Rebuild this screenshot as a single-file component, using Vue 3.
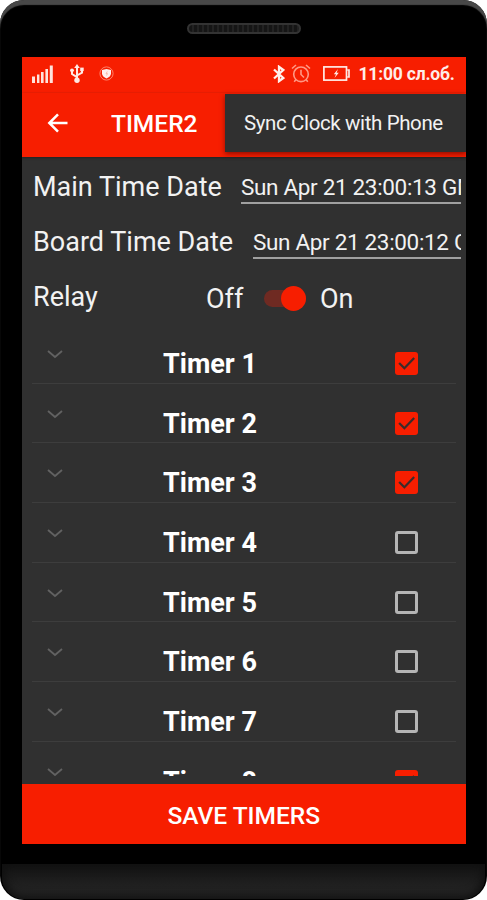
<template>
  <div class="phone">
    <div class="speaker"></div>
    <div class="chin"></div>

    <div class="screen">
      <!-- status bar -->
      <div class="status-bar">
        <svg class="icon-signal" width="22" height="18" viewBox="0 0 22 18" fill="#ffe3dc">
          <rect x="0" y="11.5" width="3" height="6.5" />
          <rect x="5" y="9.5" width="2.4" height="8.5" />
          <rect x="9" y="7" width="2.6" height="11" />
          <rect x="13.4" y="4" width="2.6" height="14" />
          <rect x="17.8" y="0.5" width="3" height="17.5" />
        </svg>
        <svg class="icon-usb" width="14" height="19" viewBox="0 0 14 19" fill="none" stroke="#ffe9e4" stroke-width="2">
          <path d="M7 3v13M7 13.2L2 10V6.5M7 11.5l5-2.8V5" />
          <path d="M7 0l2.8 4H4.2z" fill="#ffe9e4" stroke="none" />
          <circle cx="7" cy="16.2" r="2.7" fill="#ffe9e4" stroke="none" />
          <circle cx="2" cy="6.3" r="1.9" fill="#ffe9e4" stroke="none" />
          <rect x="10.2" y="3.6" width="3.5" height="3.5" fill="#ffe9e4" stroke="none" />
        </svg>
        <svg class="icon-shield" width="15" height="15" viewBox="0 0 15 15">
          <circle cx="7.5" cy="7.5" r="6.6" fill="none" stroke="#ff8068" stroke-width="1" />
          <path d="M7.5 3l4.5 1v3.4c0 2.2-2 3.8-4.5 5.2C5 11.2 3 9.6 3 7.4V4z" fill="#fff0ed" />
          <path d="M8.3 5.5L7 7.6h1.5L7.5 9.5" fill="none" stroke="#f9a694" stroke-width="0.7" />
        </svg>
        <div class="status-space"></div>
        <svg class="icon-bt" width="12" height="18" viewBox="0 0 12 18" fill="none" stroke="#fff0ec" stroke-width="2.3">
          <path d="M1 4.5l9.3 8.5L6 16.2V1.8L10.3 5 1 13.5" />
        </svg>
        <svg class="icon-alarm" width="20" height="19" viewBox="0 0 20 19" fill="none" stroke="#ff9884" stroke-width="1.6">
          <circle cx="10" cy="10.3" r="7.3" />
          <path d="M10 5.8v4.7l3 3M1 4.5L5 1M19 4.5L15 1M4.8 15.8l-1.6 2M15.2 15.8l1.6 2" />
        </svg>
        <svg class="icon-battery" width="27" height="15" viewBox="0 0 27 15" fill="none" stroke="#ffeae5" stroke-width="1.7">
          <rect x="0.9" y="0.9" width="22.6" height="13.2" />
          <path d="M24.2 4h1.8v7h-1.8" />
          <path d="M15 3l-4.2 5.3h2.2L11.5 12l4.3-5.2h-2.2z" fill="#ffeae5" stroke="none" />
        </svg>
        <span class="clock">11:00 сл.об.</span>
      </div>

      <!-- toolbar -->
      <div class="toolbar">
        <svg class="icon-back" width="21" height="20" viewBox="0 0 21 20" fill="none" stroke="#fff" stroke-width="2.5">
          <path d="M20.5 10H2.5M11 1.3L2.3 10l8.7 8.7" />
        </svg>
        <span class="toolbar-title">TIMER2</span>
        <div class="menu-popup">Sync Clock with Phone</div>
      </div>

      <!-- date rows -->
      <div class="field-row">
        <span class="label main-label">Main Time Date</span>
        <div class="date-field">{{ mainDate }}</div>
      </div>
      <div class="field-row">
        <span class="label board-label">Board Time Date</span>
        <div class="date-field">{{ boardDate }}</div>
      </div>

      <div class="relay-row">
        <span class="label relay-label">Relay</span>
        <span class="label off-label">Off</span>
        <div class="switch" :class="{ on: relayOn }" @click="relayOn = !relayOn">
          <div class="thumb"></div>
        </div>
        <span class="label on-label">On</span>
      </div>

      <!-- timer list -->
      <div class="timer-list">
        <div class="timer-row" v-for="timer in timers" :key="timer.id">
          <svg class="chevron" width="16" height="9" viewBox="0 0 16 9" fill="none" stroke="#626262" stroke-width="1.8">
            <path d="M1 1l7 6 7-6" />
          </svg>
          <span class="timer-name">Timer {{ timer.id }}</span>
          <div class="checkbox" :class="{ checked: timer.enabled }" @click="timer.enabled = !timer.enabled">
            <svg v-if="timer.enabled" width="23" height="23" viewBox="0 0 24 24" fill="none" stroke="#3a2c2a" stroke-width="2.3">
              <path d="M4.3 11.5l5.5 5.5L20 6.3" />
            </svg>
          </div>
        </div>
      </div>

      <button class="save-btn">SAVE TIMERS</button>
    </div>
  </div>
</template>

<script setup>
import { ref } from 'vue';

const mainDate = ref('Sun Apr 21 23:00:13 GMT');
const boardDate = ref('Sun Apr 21 23:00:12 GMT');
const relayOn = ref(true);
const timers = ref([
  { id: 1, enabled: true },
  { id: 2, enabled: true },
  { id: 3, enabled: true },
  { id: 4, enabled: false },
  { id: 5, enabled: false },
  { id: 6, enabled: false },
  { id: 7, enabled: false },
  { id: 8, enabled: true },
]);
</script>

<style>
body {
  background: #fff;
}
</style>

<style scoped>
.phone {
  position: relative;
  box-sizing: border-box;
  width: 487px;
  height: 900px;
  padding: 57px 21.5px 0 22px;
  background: #000;
  border-radius: 24px;
  box-shadow: inset 0 5px 1px #484848;
  overflow: hidden;
  font-family: Roboto, "Liberation Sans", sans-serif;
  color: #f2f2f2;
}

.speaker {
  position: absolute;
  box-sizing: border-box;
  left: 187px;
  top: 23px;
  width: 114px;
  height: 11px;
  border: 2px solid #333;
  border-radius: 6px;
  background: repeating-linear-gradient(90deg, #151515 0 3px, #222 3px 5px);
}

.chin {
  position: absolute;
  left: 2px;
  right: 2px;
  bottom: 1px;
  height: 35px;
  border-radius: 0 0 22px 22px;
  background: linear-gradient(#141414, #272727);
  box-shadow: inset 0 0 8px 3px #101010;
}

.screen {
  display: flex;
  flex-direction: column;
  height: 787px;
  background: #303030;
  overflow: hidden;
}

.status-bar {
  display: flex;
  align-items: center;
  flex: none;
  box-sizing: border-box;
  height: 36px;
  padding: 0 10px;
  background: #f71e00;
}

.status-bar svg {
  flex: none;
  margin-bottom: 3px;
}

.icon-usb {
  margin-left: 16px;
}

.icon-shield {
  margin-left: 15px;
}

.status-space {
  flex: 1;
}

.icon-alarm {
  margin-left: 6px;
}

.icon-battery {
  margin-left: 12px;
}

.clock {
  width: 97px;
  margin-left: 9px;
  margin-bottom: 2px;
  font-size: 17.5px;
  font-weight: 700;
  line-height: 22px;
  letter-spacing: -0.2px;
  white-space: nowrap;
  color: #ffece8;
}

.toolbar {
  position: relative;
  display: flex;
  align-items: center;
  flex: none;
  box-sizing: border-box;
  height: 64px;
  padding: 0 0 4px 25px;
  background: #f71e00;
  box-shadow: 0 1px 2px #222;
}

.toolbar-title {
  margin-left: 43px;
  font-size: 24.5px;
  font-weight: 500;
  color: #fff;
}

.menu-popup {
  position: absolute;
  left: 203px;
  right: 0;
  top: 1px;
  box-sizing: border-box;
  height: 58px;
  padding-left: 19px;
  background: #303030;
  box-shadow: 0 2px 5px rgba(60, 0, 0, 0.55);
  font-size: 20.5px;
  line-height: 58px;
  letter-spacing: -0.38px;
  white-space: nowrap;
}

.field-row {
  display: flex;
  flex: none;
  height: 55px;
  padding: 0 5px 0 11px;
}

.label {
  font-size: 27px;
  line-height: 32px;
  white-space: nowrap;
}

.field-row .label {
  margin-top: 14px;
}

.main-label {
  width: 208px;
}

.board-label {
  width: 220px;
}

.date-field {
  flex: 1;
  min-width: 0;
  box-sizing: border-box;
  height: 31px;
  margin-top: 16px;
  border-bottom: 2px solid #a0a0a0;
  font-size: 22.5px;
  line-height: 28px;
  letter-spacing: -0.33px;
  white-space: nowrap;
  overflow: hidden;
}

.relay-row {
  display: flex;
  flex: none;
  box-sizing: border-box;
  height: 57px;
  padding: 14px 0 0 11px;
}

.relay-label {
  width: 173px;
}

.off-label {
  width: 58px;
  margin-top: 2px;
}

.on-label {
  margin-left: 14px;
  margin-top: 2px;
}

.switch {
  display: flex;
  align-items: center;
  justify-content: flex-start;
  width: 42px;
  height: 17px;
  margin-top: 9px;
  border-radius: 9px;
  background: #5a5a5a;
}

.switch.on {
  justify-content: flex-end;
  background: #6f2a22;
}

.thumb {
  flex: none;
  width: 25px;
  height: 25px;
  border-radius: 50%;
  background: #f71e00;
}

.timer-list {
  flex: none;
  height: 452px;
  padding: 0 10px;
  overflow: hidden;
}

.timer-row {
  display: flex;
  box-sizing: border-box;
  height: 59.7px;
  padding-left: 15px;
  border-bottom: 1.5px solid #3d3d3d;
}

.chevron {
  flex: none;
  margin-top: 26px;
}

.timer-name {
  width: 231.5px;
  margin-left: 100px;
  margin-top: 24px;
  font-size: 27px;
  font-weight: 700;
  line-height: 32px;
  color: #fff;
}

.checkbox {
  box-sizing: border-box;
  width: 23px;
  height: 23px;
  margin-top: 28px;
  border: 3px solid #b5b5b5;
  border-radius: 3px;
}

.checkbox.checked {
  border: none;
  background: #f71e00;
}

.checkbox svg {
  display: block;
}

.save-btn {
  flex: none;
  height: 60px;
  margin-top: auto;
  padding: 3px 0 0;
  border: none;
  background: #f71e00;
  font-family: inherit;
  font-size: 24.5px;
  font-weight: 500;
  color: #fff;
  cursor: pointer;
}
</style>
